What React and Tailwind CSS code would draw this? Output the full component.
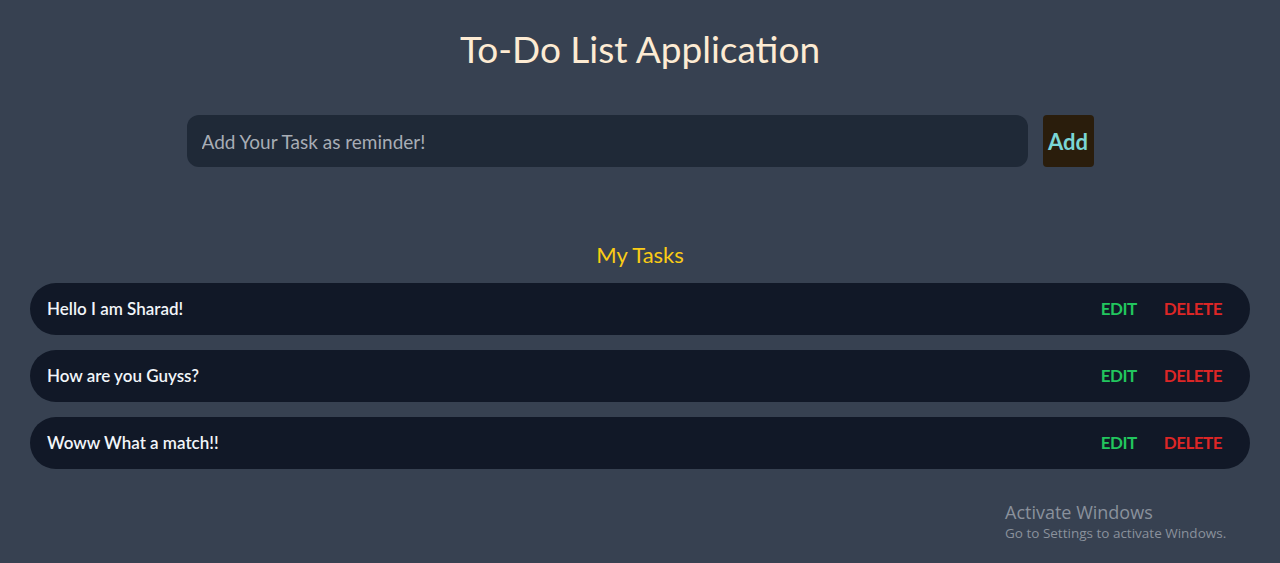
import React, { useState } from 'react';

export default function App() {
    const [task, setTask] = useState('');
    const [tasks, setTasks] = useState([
        'Hello I am Sharad!',
        'How are you Guyss?',
        'Woww What a match!!'
    ]);

    const addTask = () => {
        if (!task.trim()) return;
        setTasks([...tasks, task]);
        setTask('');
    };

    return (
        <div className="relative min-h-[563px] bg-[#374151] font-['Lato',sans-serif]">
            <h1 className="pt-[26px] text-center text-[37px] leading-[46px] text-[#fdebd3]">To-Do List Application</h1>

            <div className="mt-[43px] flex justify-center gap-[15px]">
                <input
                    value={task}
                    onChange={e => setTask(e.target.value)}
                    placeholder="Add Your Task as reminder!"
                    className="h-[52px] w-[841px] rounded-xl bg-[#1f2937] px-[15px] text-[19px] text-gray-200 outline-none placeholder:text-[#a8adb5]"
                />
                <button onClick={addTask} className="h-[52px] w-[51px] rounded bg-[#2a1d0c] text-[22px] font-bold text-[#7ad6d6]">Add</button>
            </div>

            <h2 className="mt-[74px] text-center text-[22px] leading-[28px] text-[#facc15]">My Tasks</h2>

            <ul className="mx-[30px] mt-[14px] flex flex-col gap-[15px]">
                {tasks.map((t, i) => (
                    <li key={i} className="flex h-[52px] items-center justify-between rounded-full bg-[#111827] pl-[17px] pr-[28px]">
                        <span className="text-[17px] font-semibold text-[#f1f5f9]">{t}</span>
                        <div className="flex gap-[27px] text-[17px] font-bold tracking-[-0.5px]">
                            <button className="text-[#22c55e]">EDIT</button>
                            <button onClick={() => setTasks(tasks.filter((_, j) => j !== i))} className="text-[#dc2626]">DELETE</button>
                        </div>
                    </li>
                ))}
            </ul>

            <div className="absolute left-[1005px] top-[501px] font-['Open_Sans',sans-serif] text-[#8a919c]">
                <div className="text-[18px] leading-[22px]">Activate Windows</div>
                <div className="text-[13.5px] leading-[20px]">Go to Settings to activate Windows.</div>
            </div>
        </div>
    );
}
